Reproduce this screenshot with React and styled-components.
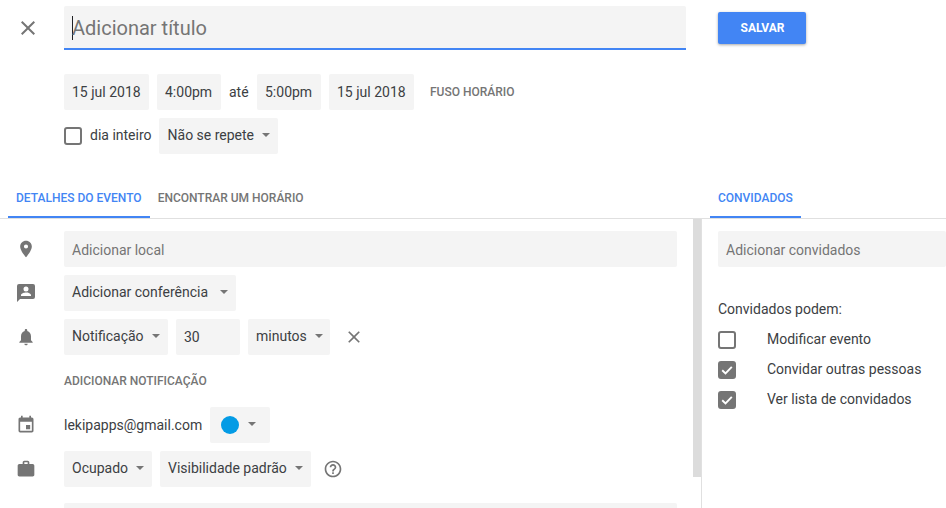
import styled, { createGlobalStyle } from "styled-components";
import {
  MdClose,
  MdPlace,
  MdNotifications,
  MdEvent,
  MdWork,
  MdHelpOutline,
} from "react-icons/md";

const GlobalStyle = createGlobalStyle`
  html, body {
    margin: 0;
    background: #fff;
  }
  * {
    box-sizing: border-box;
  }
`;

// speech bubble with a person in it, no package has this one
const ConferenceIcon = () => (
  <svg width="24" height="24" viewBox="0 0 24 24" fill="currentColor">
    <path
      fillRule="evenodd"
      d="M19 3H5a2 2 0 0 0-2 2v16l3-3h13a2 2 0 0 0 2-2V5a2 2 0 0 0-2-2z M12 5.5a2.5 2.5 0 1 1 0 5 2.5 2.5 0 0 1 0-5z M17 15H7v-1c0-1.7 3.3-2.6 5-2.6s5 .9 5 2.6v1z"
    />
  </svg>
);

const CheckMark = () => (
  <svg width="14" height="14" viewBox="0 0 14 14" fill="none" stroke="currentColor" strokeWidth="1.9">
    <polyline points="2.2,7.2 5.5,10.4 11.8,3.8" />
  </svg>
);

function App() {
  return (
    <Page>
      <GlobalStyle />
      <Header>
        <CloseCell>
          <MdClose size={24} />
        </CloseCell>
        <TitleField>
          <Cursor />
          Adicionar título
        </TitleField>
        <SaveButton>Salvar</SaveButton>
      </Header>

      <DateRow>
        <Chip $width={85}>15 jul 2018</Chip>
        <Chip $width={64}>4:00pm</Chip>
        <Until>até</Until>
        <Chip $width={64}>5:00pm</Chip>
        <Chip $width={85}>15 jul 2018</Chip>
        <TextAction $left={8}>Fuso horário</TextAction>
      </DateRow>

      <RepeatRow>
        <Checkbox />
        <AllDay>dia inteiro</AllDay>
        <RepeatChip $width={119}>
          Não se repete
          <Caret />
        </RepeatChip>
      </RepeatRow>

      <Columns>
        <LeftColumn>
          <Tabs>
            <Tab $active>Detalhes do evento</Tab>
            <Tab>Encontrar um horário</Tab>
          </Tabs>
          <LeftBody>
            <Details>
              <Row>
                <IconCell>
                  <MdPlace size={20} />
                </IconCell>
                <Field>Adicionar local</Field>
              </Row>
              <Row>
                <IconCell>
                  <ConferenceIcon />
                </IconCell>
                <DropChip $width={172}>
                  Adicionar conferência
                  <Caret $gap={12} />
                </DropChip>
              </Row>
              <Row>
                <IconCell>
                  <MdNotifications size={20} />
                </IconCell>
                <DropChip $width={104}>
                  Notificação
                  <Caret />
                </DropChip>
                <Chip $width={64}>30</Chip>
                <DropChip $width={82}>
                  minutos
                  <Caret />
                </DropChip>
                <RemoveIcon>
                  <MdClose size={20} />
                </RemoveIcon>
              </Row>
              <NotificationAction>
                <TextAction>Adicionar notificação</TextAction>
              </NotificationAction>
              <Row>
                <IconCell>
                  <MdEvent size={20} />
                </IconCell>
                <Email>lekipapps@gmail.com</Email>
                <ColorChip $width={60}>
                  <ColorDot />
                  <Caret $gap={9} />
                </ColorChip>
              </Row>
              <Row>
                <IconCell>
                  <MdWork size={20} />
                </IconCell>
                <DropChip $width={88}>
                  Ocupado
                  <Caret />
                </DropChip>
                <DropChip $width={151}>
                  Visibilidade padrão
                  <Caret />
                </DropChip>
                <HelpIcon>
                  <MdHelpOutline size={20} />
                </HelpIcon>
              </Row>
              <NextRow>
                <IconCell />
                <Field />
              </NextRow>
            </Details>
            <ScrollThumb />
          </LeftBody>
        </LeftColumn>

        <RightColumn>
          <Tabs>
            <Tab $active>Convidados</Tab>
          </Tabs>
          <GuestBody>
            <Field>Adicionar convidados</Field>
            <GuestsLabel>Convidados podem:</GuestsLabel>
            <Permission>
              <Checkbox />
              <PermissionText>Modificar evento</PermissionText>
            </Permission>
            <Permission>
              <Checkbox $checked>
                <CheckMark />
              </Checkbox>
              <PermissionText>Convidar outras pessoas</PermissionText>
            </Permission>
            <Permission>
              <Checkbox $checked>
                <CheckMark />
              </Checkbox>
              <PermissionText>Ver lista de convidados</PermissionText>
            </Permission>
          </GuestBody>
        </RightColumn>
      </Columns>
    </Page>
  );
}

export default App;

const Page = styled.div`
  width: 946px;
  height: 508px;
  overflow: hidden;
  padding-top: 6px;
  font-family: Roboto, "Liberation Sans", sans-serif;
  font-size: 14px;
  color: #3c4043;
  background: #fff;
`;

const Header = styled.div`
  display: flex;
  align-items: flex-start;
`;

const CloseCell = styled.div`
  width: 64px;
  height: 44px;
  padding-right: 8px;
  display: flex;
  align-items: center;
  justify-content: center;
  color: #757575;
`;

const TitleField = styled.div`
  width: 622px;
  height: 44px;
  padding: 2px 8px 0;
  display: flex;
  align-items: center;
  font-size: 20px;
  color: #757575;
  background: #f4f4f4;
  border-bottom: 2px solid #4285f4;
  border-radius: 2px 2px 0 0;
`;

const Cursor = styled.span`
  width: 1px;
  height: 24px;
  margin-right: -1px;
  background: #202124;
`;

const SaveButton = styled.button`
  width: 88px;
  height: 32px;
  margin: 6px 0 0 32px;
  padding: 0 0 0 1px;
  border: 0;
  border-radius: 2px;
  font-family: inherit;
  font-size: 12px;
  font-weight: 700;
  text-transform: uppercase;
  color: #fff;
  background: #4285f4;
  box-shadow: 0 1px 3px rgba(0, 0, 0, 0.35);
`;

const DateRow = styled.div`
  display: flex;
  align-items: center;
  gap: 8px;
  margin-top: 24px;
  padding-left: 64px;
`;

const RepeatRow = styled.div`
  display: flex;
  align-items: center;
  margin-top: 8px;
  padding-left: 64px;
`;

const Chip = styled.div`
  flex: none;
  width: ${(p) => p.$width}px;
  height: 36px;
  padding: 0 8px;
  display: flex;
  align-items: center;
  white-space: nowrap;
  background: #f4f4f4;
  border-radius: 2px;
`;

// dropdown chips sit their label a pixel higher than plain ones
const DropChip = styled(Chip)`
  padding-bottom: 2px;
`;

const RepeatChip = styled(DropChip)`
  padding-left: 9px;
`;

const ColorChip = styled(DropChip)`
  padding-left: 11px;
`;

const Caret = styled.span`
  width: 0;
  height: 0;
  margin-left: ${(p) => p.$gap || 8}px;
  border-left: 4px solid transparent;
  border-right: 4px solid transparent;
  border-top: 4px solid #757575;
`;

const Until = styled.span`
  width: 20px;
`;

const TextAction = styled.span`
  margin-left: ${(p) => p.$left || 0}px;
  font-size: 12px;
  font-weight: 500;
  text-transform: uppercase;
  white-space: nowrap;
  color: #757575;
`;

const Checkbox = styled.span`
  flex: none;
  width: 18px;
  height: 18px;
  display: flex;
  align-items: center;
  justify-content: center;
  border: 2px solid #757575;
  border-radius: 3px;
  color: #fff;
  background: ${(p) => (p.$checked ? "#757575" : "#fff")};
`;

const AllDay = styled.span`
  margin: -2px 7px 0 8px;
`;

const Columns = styled.div`
  display: flex;
  margin-top: 24px;
`;

const LeftColumn = styled.div`
  flex: 0 0 702px;
`;

const RightColumn = styled.div`
  flex: 1;
  min-width: 0;
`;

const Tabs = styled.div`
  height: 41px;
  display: flex;
  padding-left: 8px;
  border-bottom: 1px solid #e0e0e0;
`;

const Tab = styled.div`
  height: 40px;
  padding: 2px 8px 0;
  display: flex;
  align-items: center;
  font-size: 12px;
  font-weight: 500;
  text-transform: uppercase;
  white-space: nowrap;
  color: ${(p) => (p.$active ? "#4285f4" : "#757575")};
  border-bottom: 2px solid ${(p) => (p.$active ? "#4285f4" : "transparent")};
`;

const LeftBody = styled.div`
  display: flex;
  height: 289px;
  border-right: 1px solid #e0e0e0;
  overflow: hidden;
`;

const Details = styled.div`
  flex: 0 0 693px;
  padding: 12px 16px 0 0;
  display: flex;
  flex-direction: column;
  gap: 8px;
`;

const ScrollThumb = styled.div`
  width: 8px;
  height: 258px;
  background: #dcdcdc;
`;

const Row = styled.div`
  flex: none;
  display: flex;
  align-items: center;
  gap: 8px;
  height: 36px;
`;

const NextRow = styled(Row)`
  margin-top: 8px;
`;

const IconCell = styled.div`
  flex: none;
  width: 56px;
  padding-right: 4px;
  display: flex;
  justify-content: center;
  color: #757575;
`;

const Field = styled.div`
  flex: 1;
  height: 36px;
  padding: 2px 8px 0;
  display: flex;
  align-items: center;
  color: #757575;
  background: #f4f4f4;
  border-radius: 2px;
`;

const RemoveIcon = styled.div`
  display: flex;
  margin-left: 6px;
  color: #757575;
`;

const HelpIcon = styled.div`
  display: flex;
  margin-left: 4px;
  color: #757575;
`;

const NotificationAction = styled.div`
  flex: none;
  height: 36px;
  padding-left: 64px;
  display: flex;
  align-items: center;
`;

const Email = styled.span`
  white-space: nowrap;
`;

const ColorDot = styled.span`
  flex: none;
  width: 18px;
  height: 18px;
  margin-top: 2px;
  border-radius: 50%;
  background: #039be5;
`;

const GuestBody = styled.div`
  padding: 12px 0 0 16px;
`;

const GuestsLabel = styled.div`
  margin: 34px 0 14px;
  line-height: 16px;
`;

const Permission = styled.div`
  height: 18px;
  margin-top: 12px;
  display: flex;
  align-items: center;
  gap: 31px;
  white-space: nowrap;
`;

const PermissionText = styled.span`
  margin-top: -2px;
`;
